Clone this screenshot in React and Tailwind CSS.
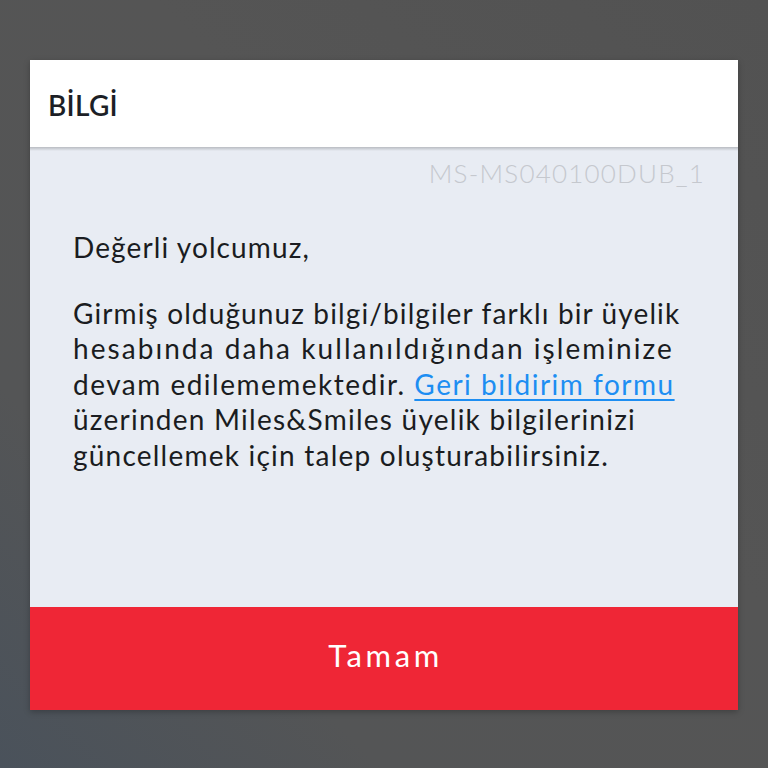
export default function App() {
  return (
    <div
      className="w-[768px] h-[768px] bg-[linear-gradient(to_top_right,#4a525b_0%,#545556_25%,#555555_60%,#525252_100%)] pt-[60px] px-[30px]"
      style={{ fontFamily: "Lato, 'Noto Sans', sans-serif" }}
    >
      <div className="w-[708px] h-[650px] flex flex-col shadow-[0_2px_6px_rgba(0,0,0,0.25)]">
        <div className="h-[87px] bg-white flex items-center pl-[18px] shrink-0">
          <span className="text-[28px] font-semibold text-[#1c1f26] leading-none pt-[2px] tracking-[0.3px]">BİLGİ</span>
        </div>
        <div className="flex-1 bg-[#e8ecf3] relative flex flex-col">
          <div className="absolute top-0 left-0 right-0 h-[4px] bg-[linear-gradient(to_bottom,#b9bcc2,#e8ecf3)]"></div>
          <div className="flex justify-end pr-[33px] pt-[9px]">
            <span className="text-[26px] font-light text-[#c5c8ce] leading-[34px] tracking-[1.2px]">MS-MS040100DUB_1</span>
          </div>
          <div className="pl-[43px] pt-[40px] text-[28px] text-[#1a1c21] leading-[35.5px] whitespace-nowrap">
            <p className="tracking-[1.1px]">Değerli yolcumuz,</p>
            <p className="mt-[30px] flex flex-col items-start">
              <span className="tracking-[1.12px]">Girmiş olduğunuz bilgi/bilgiler farklı bir üyelik</span>
              <span className="tracking-[2.05px]">hesabında daha kullanıldığından işleminize</span>
              <span className="tracking-[1.5px]">
                devam edilememektedir.{" "}
                <a className="text-[#1d8ef2] underline underline-offset-[4px] decoration-[1.5px]">Geri bildirim formu</a>
              </span>
              <span className="tracking-[1.25px]">üzerinden Miles&amp;Smiles üyelik bilgilerinizi</span>
              <span className="tracking-[1.22px]">güncellemek için talep oluşturabilirsiniz.</span>
            </p>
          </div>
        </div>
        <div className="h-[103px] bg-[#ef2636] flex items-center justify-center shrink-0">
          <span className="text-white text-[31px] tracking-[3.6px] pl-[3px] pb-[6px]">Tamam</span>
        </div>
      </div>
    </div>
  );
}
